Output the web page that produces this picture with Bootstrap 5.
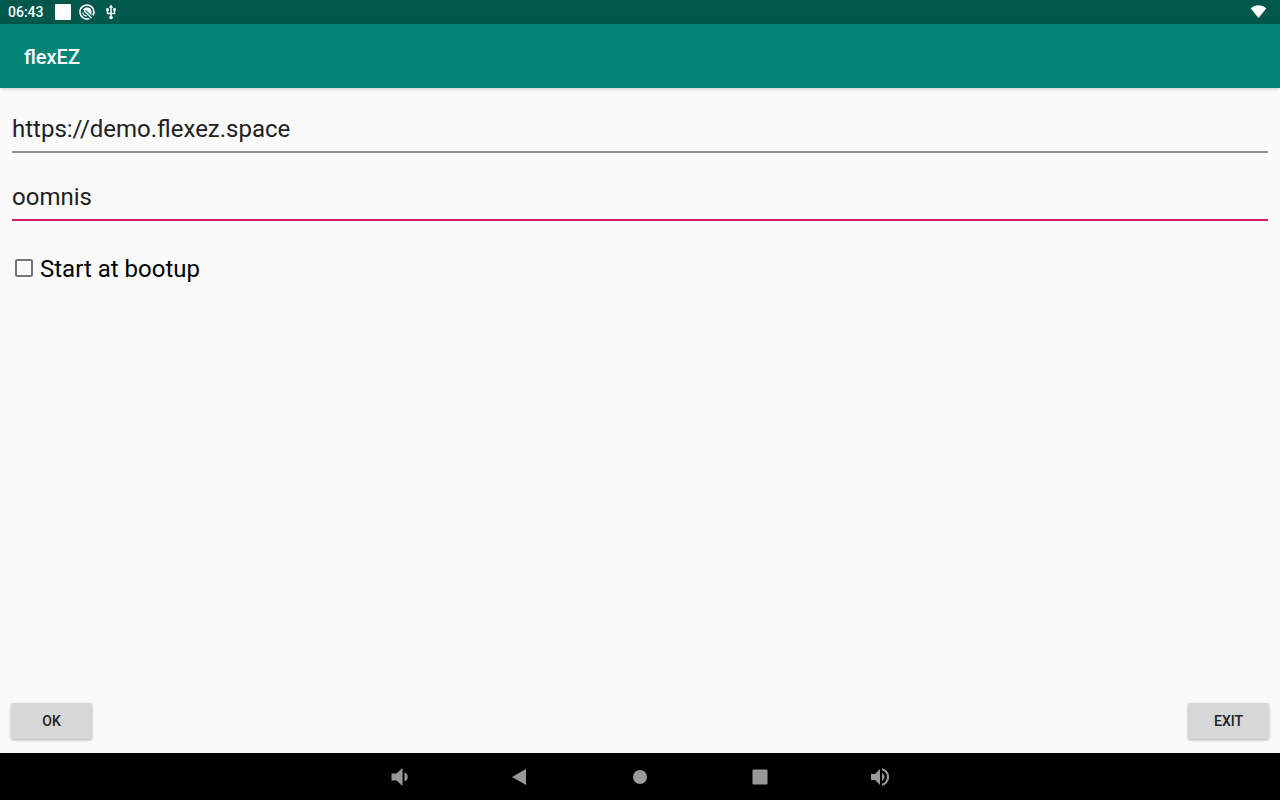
<!DOCTYPE html>
<html lang="en">
<head>
<meta charset="utf-8">
<meta name="viewport" content="width=device-width, initial-scale=1">
<title>flexEZ</title>
<link href="https://cdn.jsdelivr.net/npm/bootstrap@5.3.0/dist/css/bootstrap.min.css" rel="stylesheet">
<style>
  body { font-family: Roboto, sans-serif; background: #fafafa; color: #000; }
  .status-bar { height: 24px; background: #00574b; font-size: 14px; line-height: 24px; }
  .app-clock { font-weight: 500; }
  .app-bar { height: 64px; background: #008577; box-shadow: 0 1px 3px rgba(0,0,0,.2); }
  .app-title { font-size: 20px; line-height: 28px; font-weight: 500; padding-top: 2px; }
  .line-input, .line-input:focus {
    height: 44px; padding: 0 0 2px; font-size: 24px; line-height: 32px; color: #212121;
    background: transparent; border: 0; border-bottom: 2px solid #929292; border-radius: 0; box-shadow: none;
  }
  .line-input.current { border-bottom-color: #d81b60; }
  .fields { padding: 21px 12px 0; gap: 24px; }
  .boot-check { margin-top: 8px; padding-left: 3px; gap: 7px; font-size: 24px; line-height: 32px; }
  .boot-check .form-check-input { width: 18px; height: 18px; margin: 0 0 2px; border: 2px solid #757575; border-radius: 2px; background-color: transparent; box-shadow: none; }
  .actions { padding: 0 11px 14px; }
  .btn-raised { width: 81px; height: 36px; padding: 0; font-size: 14px; font-weight: 500; color: #212121;
    background: #d6d7d7; border: 0; border-radius: 2px; box-shadow: 0 1px 3px rgba(0,0,0,.3); }
  .btn-raised:hover { background: #cbcccc; }
  .system-nav { height: 47px; background: #000; }
  .nav-key { width: 120px; padding: 0; border: 0; background: none; color: #999; }
</style>
</head>
<body>
<div class="d-flex flex-column min-vh-100">
  <div class="status-bar d-flex align-items-center justify-content-between text-white ps-2">
    <div class="d-flex align-items-center">
      <span class="app-clock">06:43</span>
      <svg class="ms-2" width="72" height="24" viewBox="0 0 72 24" fill="none" aria-hidden="true">
        <rect x="3" y="4" width="16" height="16" rx="1" fill="#fff"/>
        <path d="M37.500 18.500A7 7 0 1 1 41 15.500" stroke="#fff" stroke-width="1.500"/>
        <path d="M31 10a4.500 4.500 0 0 1 8.500 1v4.500L34.500 10.500z" fill="#fff"/>
        <path d="M32 10.500l7.500 7.500" stroke="#fff" stroke-width="1.300"/>
        <path d="M30.800 12.500c.3 2.200 2 3.500 4.200 3.500" stroke="#fff" stroke-width="1.300"/>
        <path d="M59 7v10M55.500 10v3.500h7V10" stroke="#fff" stroke-width="1.500"/>
        <path d="M59 4.500l2.200 3.200h-4.400z" fill="#fff"/>
        <circle cx="59" cy="17.500" r="1.800" fill="#fff"/><circle cx="55.500" cy="9.500" r="1.500" fill="#fff"/>
        <path d="M61.200 8.200h2.600v2.600h-2.600z" fill="#fff"/>
      </svg>
    </div>
    <svg width="30" height="24" viewBox="0 0 30 24" aria-hidden="true"><path d="M8.500 18 .8 8.400c4.300-4.200 11.100-4.200 15.400 0z" fill="#fff"/></svg>
  </div>
  <header class="app-bar d-flex align-items-center px-4 text-white">
    <h1 class="app-title m-0">flexEZ</h1>
  </header>
  <form class="d-flex flex-column flex-grow-1">
    <div class="fields d-flex flex-column">
      <input class="form-control line-input" type="url" value="https://demo.flexez.space" aria-label="Server address">
      <input class="form-control line-input current" type="text" value="oomnis" aria-label="Name">
      <div class="boot-check d-flex align-items-center">
        <input class="form-check-input" type="checkbox" id="bootup">
        <label for="bootup">Start at bootup</label>
      </div>
    </div>
    <div class="actions d-flex justify-content-between mt-auto">
      <button class="btn btn-raised" type="button">OK</button>
      <button class="btn btn-raised" type="button">EXIT</button>
    </div>
  </form>
  <nav class="system-nav d-flex justify-content-center" aria-label="System">
    <button class="nav-key" type="button" aria-label="Volume down"><svg width="24" height="24" viewBox="0 0 24 24" fill="currentColor"><path d="M3.500 8.500v7h5l6 5.500V3l-6 5.500zM16.500 7.500v9c4.300-1.500 4.300-7.500 0-9z"/></svg></button>
    <button class="nav-key" type="button" aria-label="Back"><svg width="24" height="24" viewBox="0 0 24 24" fill="currentColor"><path d="M18 4v16L4 12z"/></svg></button>
    <button class="nav-key" type="button" aria-label="Home"><svg width="24" height="24" viewBox="0 0 24 24" fill="currentColor"><circle cx="12" cy="12" r="7"/></svg></button>
    <button class="nav-key" type="button" aria-label="Recent apps"><svg width="24" height="24" viewBox="0 0 24 24" fill="currentColor"><rect x="4.500" y="4.500" width="15" height="15" rx="1"/></svg></button>
    <button class="nav-key" type="button" aria-label="Volume up"><svg width="24" height="24" viewBox="0 0 24 24" fill="currentColor"><path d="M3 9v6h4l5 5V4L7 9zM16.500 12A4.500 4.500 0 0 0 14 8v8a4.500 4.500 0 0 0 2.500-4zM14 3.200v2.100a7 7 0 0 1 0 13.400v2.100a9 9 0 0 0 0-17.600z"/></svg></button>
  </nav>
</div>
<script src="https://cdn.jsdelivr.net/npm/bootstrap@5.3.0/dist/js/bootstrap.bundle.min.js"></script>
</body>
</html>
